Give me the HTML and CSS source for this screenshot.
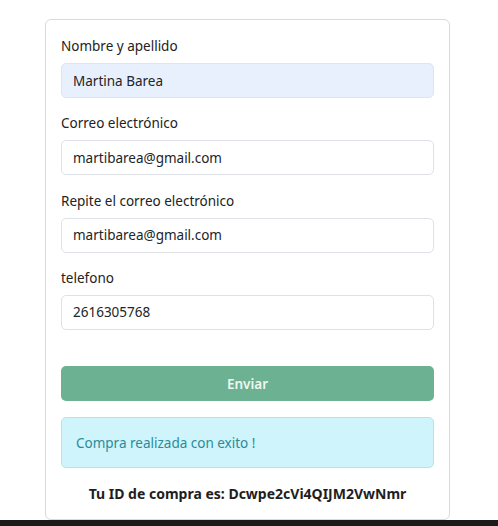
FILE: index.html
```html
<!DOCTYPE html>
<html lang="es">
<head>
<meta charset="utf-8">
<link rel="stylesheet" href="styles.css">
</head>
<body>
<div class="page">
  <form class="card">
    <div class="field">
      <label class="label">Nombre y apellido</label>
      <div class="input filled">Martina Barea</div>
    </div>
    <div class="field">
      <label class="label">Correo electrónico</label>
      <div class="input">martibarea@gmail.com</div>
    </div>
    <div class="field">
      <label class="label">Repite el correo electrónico</label>
      <div class="input">martibarea@gmail.com</div>
    </div>
    <div class="field">
      <label class="label">telefono</label>
      <div class="input">2616305768</div>
    </div>
    <button type="button" class="btn">Enviar</button>
    <div class="alert">Compra realizada con exito !</div>
    <p class="order-id">Tu ID de compra es: Dcwpe2cVi4QIJM2VwNmr</p>
  </form>
</div>
<div class="footer-strip"></div>
</body>
</html>
```

FILE: styles.css
```css
* { box-sizing: border-box; }
html, body {
  margin: 0;
  padding: 0;
  background: #141414;
}
body {
  font-family: "Noto Sans", "Open Sans", sans-serif;
  font-size: 13.5px;
  color: #212529;
}
.page {
  background: #ffffff;
  height: 520px;
  padding-top: 19px;
  padding-left: 45px;
}
.card {
  width: 405px;
  height: 501px;
  border: 1px solid #d9d9d9;
  border-radius: 6px;
  padding: 15px;
  display: flex;
  flex-direction: column;
}
.field {
  display: flex;
  flex-direction: column;
  margin-bottom: 14.3px;
}
.label {
  line-height: 22px;
  margin-bottom: 6px;
  color: #222;
}
.input {
  height: 35px;
  border: 1px solid #dee2e6;
  border-radius: 5px;
  padding: 0 11px;
  display: flex;
  align-items: center;
  color: #212529;
}
.input.filled {
  background: #e8f0fe;
  border-color: #dde5f0;
}
.btn {
  margin-top: 22px;
  height: 35px;
  border: none;
  border-radius: 5px;
  background: #6bb192;
  color: #eef7f2;
  font-family: inherit;
  font-size: 13.5px;
  font-weight: 600;
}
.alert {
  margin-top: 16px;
  height: 51px;
  border: 1px solid #aee6f0;
  border-radius: 5px;
  background: #cff4fb;
  color: #2b8b99;
  padding: 0 14px;
  display: flex;
  align-items: center;
}
.order-id {
  margin: 15px 0 0;
  text-align: center;
  font-size: 14px;
  font-weight: 700;
  line-height: 21px;
  color: #1e1e1e;
}
.footer-strip {
  height: 6px;
  background: #1b1b1b;
}
```
